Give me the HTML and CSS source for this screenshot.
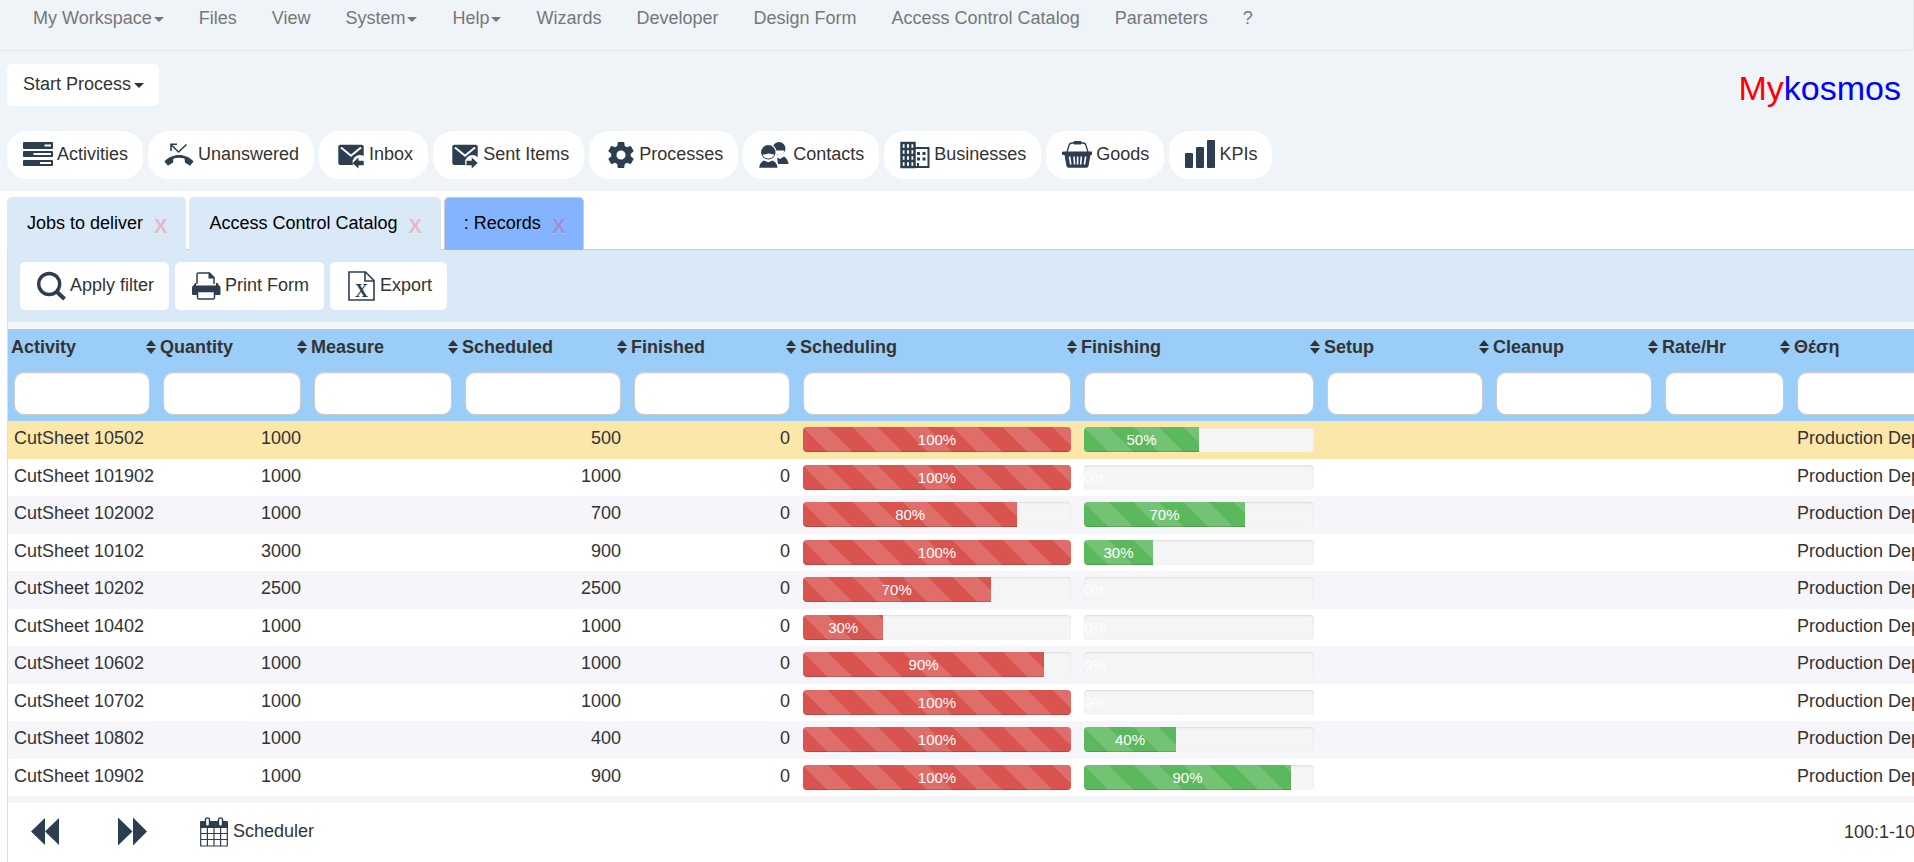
FILE: index.html
```html
<!DOCTYPE html>
<html lang="en">

<head>
    <meta charset="UTF-8">
    <meta name="viewport" content="width=device-width, initial-scale=1.0">
    <title>Mykosmos - Records</title>
    <link rel="stylesheet" href="styles.css">
</head>

<body>

    <header class="top">
        <nav class="navbar">
            <a href="#">My Workspace<span class="caret"></span></a>
            <a href="#">Files</a>
            <a href="#">View</a>
            <a href="#">System<span class="caret"></span></a>
            <a href="#">Help<span class="caret"></span></a>
            <a href="#">Wizards</a>
            <a href="#">Developer</a>
            <a href="#">Design Form</a>
            <a href="#">Access Control Catalog</a>
            <a href="#">Parameters</a>
            <a href="#">?</a>
        </nav>

        <div class="brand-row">
            <button class="btn btn-start">Start Process <span class="caret"></span></button>
            <div class="brand"><span class="brand-my">My</span>kosmos</div>
        </div>

        <div class="modules">
            <button class="btn btn-icon pill">
                <svg class="icon" viewBox="0 0 30 30">
                    <rect x="0" y="2" width="30" height="7" rx="1" />
                    <rect x="0" y="11" width="30" height="6" rx="1" />
                    <rect x="0" y="20" width="30" height="6" rx="1" />
                    <path class="cut" d="M21.5 5.5h6.5M10.500 14h17.500M17 23h11" stroke-width="2" />
                </svg>
                <span>Activities</span>
            </button>
            <button class="btn btn-icon pill">
                <svg class="icon" viewBox="0 0 30 30">
                    <path class="line" d="M7 11V4.300h6M7 4.500l7.500 7.500 8-7.500" stroke-width="1.600" />
                    <path d="M.4 21.600C8 12.800 22 12.800 29.600 21.600L26 25.800C24 24.500 22.500 23.500 21 22.800L20.500 18.500C17 17.400 13 17.400 9.500 18.500L9 22.800C7.500 23.500 6 24.500 4 25.800Z" />
                </svg>
                <span>Unanswered</span>
            </button>
            <button class="btn btn-icon pill">
                <svg class="icon" viewBox="0 0 30 30">
                    <rect x="3.300" y="4.700" width="25.400" height="20.300" rx="2" />
                    <path class="cut" d="M6 7.500L16 15.800 26 7.500" stroke-width="2" />
                    <circle class="paper" cx="25" cy="22.500" r="7.500" />
                    <path d="M17.500 23l6-5.500v3.300h5.200v4.400h-5.200v3.300z" />
                </svg>
                <span>Inbox</span>
            </button>
            <button class="btn btn-icon pill">
                <svg class="icon" viewBox="0 0 30 30">
                    <rect x="3.300" y="4.700" width="25.400" height="20.300" rx="2" />
                    <path class="cut" d="M6 7.500L16 15.800 26 7.500" stroke-width="2" />
                    <circle class="paper" cx="23.500" cy="22.500" r="7.500" />
                    <path d="M28.700 23l-6-5.500v3.300h-5.200v4.400h5.200v3.300z" />
                </svg>
                <span>Sent Items</span>
            </button>
            <button class="btn btn-icon pill">
                <svg class="icon" viewBox="0 0 30 30">
                    <path transform="translate(.4 -.6) scale(1.3)" d="M19.43 12.98c.04-.32.07-.64.07-.98s-.03-.66-.07-.98l2.110-1.650c.19-.15.24-.42.12-.64l-2-3.460c-.12-.22-.39-.3-.61-.22l-2.490 1c-.52-.4-1.080-.73-1.690-.98l-.38-2.650C14.460 2.180 14.250 2 14 2h-4c-.25 0-.46.18-.49.42l-.38 2.650c-.61.25-1.170.59-1.690.98l-2.490-1c-.23-.09-.49 0-.61.22l-2 3.460c-.13.22-.07.49.12.64l2.110 1.650c-.04.32-.07.65-.07.98s.03.66.07.98l-2.110 1.650c-.19.15-.24.42-.12.64l2 3.460c.12.22.39.3.61.22l2.490-1c.52.4 1.080.73 1.690.98l.38 2.650c.03.24.24.42.49.42h4c.25 0 .46-.18.49-.42l.38-2.650c.61-.25 1.170-.59 1.690-.98l2.490 1c.23.09.49 0 .61-.22l2-3.460c.12-.22.07-.49-.12-.64l-2.110-1.650zM12 15.500c-1.930 0-3.500-1.570-3.500-3.500s1.570-3.500 3.500-3.500 3.500 1.570 3.500 3.500-1.570 3.500-3.500 3.500z" />
                </svg>
                <span>Processes</span>
            </button>
            <button class="btn btn-icon pill">
                <svg class="icon" viewBox="0 0 30 30">
                    <circle cx="20" cy="8.500" r="6.500" />
                    <path class="paper" d="M15.500 10.500h10c-.5 3-2.500 4.500-5 4.500s-4.500-1.500-5-4.500z" />
                    <path d="M18 17.500l3 1.500 4-2.500c2.500 1.500 4 4 4.500 7.500H19z" />
                    <circle class="paper" cx="9.300" cy="12.500" r="8.500" />
                    <circle cx="9.300" cy="12.300" r="7.200" />
                    <path class="paper" d="M3.500 14.500c4 0 5-1 6.500-1 1.500 0 3 1 5.200 1-.6 2.600-3 3.900-5.900 3.900s-5.200-1.200-5.800-3.900z" />
                    <path d="M.2 27.800c.3-3.500 2-6 4.600-7.300l4.500 1.800 4.500-1.800c2.600 1.300 4.400 3.800 4.700 7.300z" />
                </svg>
                <span>Contacts</span>
            </button>
            <button class="btn btn-icon pill">
                <svg class="icon" viewBox="0 0 30 30">
                    <path class="line" d="M1.500 3h13v24H1.500zM5.800 3v24M10.200 3v24M1.500 9h13M1.500 15h13M1.500 21h13" stroke-width="2.500" />
                    <path class="line" d="M14.500 8h14v19h-14" stroke-width="2" />
                    <path d="M17 12h3v3h-3zM22.500 12h3v3h-3zM17 17.500h3v3h-3zM22.500 17.500h3v3h-3zM17 23h2v3h-2z" />
                </svg>
                <span>Businesses</span>
            </button>
            <button class="btn btn-icon pill">
                <svg class="icon" viewBox="0 0 30 30">
                    <path class="line" d="M5 12L7 5.500Q7.500 3 10 3H21Q23.500 3 24 5.500L26 12" stroke-width="1.300" />
                    <rect x="11.500" y="1" width="8" height="3.500" rx="1" />
                    <path d="M1.500 11.500h28a1 1 0 0 1 0 3.500h-1l-2 11a2 2 0 0 1-2 1.800h-18a2 2 0 0 1-2-1.800l-2-11h-1a1 1 0 0 1 0-3.500z" />
                    <path class="cut" d="M7.500 16.500l1.300 8M12 16.500l.6 8M15.600 16.500v8M19.300 16.500l-.6 8M23.700 16.500l-1.300 8" stroke-width="1.600" />
                </svg>
                <span>Goods</span>
            </button>
            <button class="btn btn-icon pill">
                <svg class="icon" viewBox="0 0 30 30">
                    <rect x="0" y="13" width="8" height="15" rx="1" />
                    <rect x="11" y="7" width="8" height="21" rx="1" />
                    <rect x="22" y="0" width="8" height="28" rx="1" />
                </svg>
                <span>KPIs</span>
            </button>
        </div>
    </header>

    <main class="workspace">
        <ul class="tabs">
            <li class="tab"><a href="#">Jobs to deliver</a><button class="close" aria-label="Close Jobs to deliver">X</button></li>
            <li class="tab"><a href="#">Access Control Catalog</a><button class="close" aria-label="Close Access Control Catalog">X</button></li>
            <li class="tab active"><a href="#">: Records</a><button class="close" aria-label="Close Records">X</button></li>
        </ul>

        <div class="panel">
            <div class="toolbar">
                <button class="btn btn-icon">
                    <svg class="icon" viewBox="0 0 30 30">
                        <circle class="line" cx="13.200" cy="13" r="10.500" stroke-width="3.400" />
                        <path class="line" d="M20.500 20.500L28.500 28" stroke-width="4.200" />
                    </svg>
                    <span>Apply filter</span>
                </button>
                <button class="btn btn-icon">
                    <svg class="icon" viewBox="0 0 30 30">
                        <path class="line" d="M6 13V3.500Q6 2 7.500 2H18.500L23 6.500V13" stroke-width="1.500" />
                        <path d="M17.500 1.500l6 6h-6z" />
                        <path d="M3 14q0-2 2-2v2.500h20V12h1q1.500 0 1.500 2 2 .5 2 3v6q0 1-1 1H2q-1 0-1-1v-6q0-2.500 2-3z" />
                        <path class="paper" d="M6.500 20.500h17v6q0 1.500-1.500 1.500H8q-1.500 0-1.500-1.500z" />
                        <path class="line" d="M6.500 20.500h17v6q0 1.500-1.500 1.500H8q-1.500 0-1.500-1.500z" stroke-width="1.500" />
                    </svg>
                    <span>Print Form</span>
                </button>
                <button class="btn btn-icon">
                    <svg class="icon" viewBox="0 0 30 30">
                        <path class="line" d="M3 1H19.500L28 9.500V29H3zM19 1.500V10H28" stroke-width="1.600" />
                        <text class="glyph" x="15.500" y="26" text-anchor="middle">X</text>
                    </svg>
                    <span>Export</span>
                </button>
            </div>

            <div class="grid">
                <table class="records">
                    <colgroup>
                        <col class="w-activity">
                        <col class="w-short">
                        <col class="w-short">
                        <col class="w-medium">
                        <col class="w-medium">
                        <col class="w-scheduling">
                        <col class="w-finishing">
                        <col class="w-medium">
                        <col class="w-medium">
                        <col class="w-rate">
                        <col class="w-place">
                    </colgroup>
                    <thead>
                        <tr class="titles" id="titles"></tr>
                        <tr class="filters" id="filters"></tr>
                    </thead>
                    <tbody id="rows"></tbody>
                </table>

                <div class="footer">
                    <div class="pager">
                        <button class="btn btn-icon" aria-label="Previous page">
                            <svg class="icon" viewBox="0 0 30 30">
                                <path d="M15 1v27L1 14.500zM29 1v27L15 14.500z" />
                            </svg>
                        </button>
                        <button class="btn btn-icon" aria-label="Next page">
                            <svg class="icon" viewBox="0 0 30 30">
                                <path d="M1 0.500v28L15.500 14.500zM16 0.500v28L30 14.500z" />
                            </svg>
                        </button>
                    </div>
                    <button class="btn btn-icon">
                        <svg class="icon" viewBox="0 0 30 30">
                            <path d="M1 5q0-1 1-1h26q1 0 1 1v6H1z" />
                            <path class="line" d="M1.700 10v19H28.300V10M1.700 16.500H28.300M1.700 22.500H28.300M8.400 10V29M15 10V29M21.600 10V29" stroke-width="1.200" />
                            <path class="line" d="M8.500 3v4M21.500 3v4" stroke-width="5.500" stroke-linecap="round" />
                            <path class="cut" d="M8.500 2.800v4.500M21.500 2.800v4.500" stroke-width="2.600" stroke-linecap="round" />
                        </svg>
                        <span>Scheduler</span>
                    </button>
                    <span class="count">100:1-100</span>
                </div>
            </div>
        </div>
    </main>

    <script>
        const columns = ['Activity', 'Quantity', 'Measure', 'Scheduled', 'Finished', 'Scheduling',
            'Finishing', 'Setup', 'Cleanup', 'Rate/Hr', 'Θέση'];

        // activity, quantity, scheduled, finished, scheduling %, finishing %
        const records = [
            ['CutSheet 10502', 1000, 500, 0, 100, 50],
            ['CutSheet 101902', 1000, 1000, 0, 100, 0],
            ['CutSheet 102002', 1000, 700, 0, 80, 70],
            ['CutSheet 10102', 3000, 900, 0, 100, 30],
            ['CutSheet 10202', 2500, 2500, 0, 70, 0],
            ['CutSheet 10402', 1000, 1000, 0, 30, 0],
            ['CutSheet 10602', 1000, 1000, 0, 90, 0],
            ['CutSheet 10702', 1000, 1000, 0, 100, 0],
            ['CutSheet 10802', 1000, 400, 0, 100, 40],
            ['CutSheet 10902', 1000, 900, 0, 100, 90]
        ];

        function bar(value, type) {
            return `<div class="progress"><div class="bar ${type}" style="width: ${value}%">${value}%</div></div>`;
        }

        document.getElementById('titles').innerHTML = columns.map((name, i) =>
            `<th scope="col"><div class="title"><label for="filter${i}">${name}</label><span class="sort"></span></div></th>`
        ).join('');

        document.getElementById('filters').innerHTML = columns.map((name, i) =>
            `<td><input type="text" id="filter${i}"></td>`
        ).join('');

        document.getElementById('rows').innerHTML = records.map((r, i) => `
            <tr class="${i === 0 ? 'selected' : ''}">
                <td>${r[0]}</td>
                <td class="num">${r[1]}</td>
                <td></td>
                <td class="num">${r[2]}</td>
                <td class="num">${r[3]}</td>
                <td>${bar(r[4], 'danger')}</td>
                <td>${bar(r[5], 'success')}</td>
                <td></td>
                <td></td>
                <td></td>
                <td>Production Department</td>
            </tr>`
        ).join('');
    </script>

</body>

</html>
```
FILE: styles.css
```css
* {
    box-sizing: border-box;
}

body {
    display: flex;
    flex-direction: column;
    min-height: 100vh;
    margin: 0;
    overflow-x: hidden;
    font-family: Arial, "Liberation Sans", sans-serif;
    font-size: 18px;
    line-height: 26px;
    color: #333;
    background: #fff;
}

a {
    color: inherit;
    text-decoration: none;
}

/* Top area */
.top {
    background: #eff4f9;
}

.navbar {
    display: flex;
    gap: 35px;
    height: 51px;
    padding: 5px 33px;
    border-right: 1px solid #e7e7e7;
    border-bottom: 1px solid #e7e7e7;
    border-bottom-right-radius: 4px;
    color: #777;
}

.caret {
    display: inline-block;
    margin-left: 2px;
    vertical-align: middle;
    border-top: 5px solid;
    border-left: 5px solid transparent;
    border-right: 5px solid transparent;
}

.brand-row {
    display: flex;
    justify-content: space-between;
    align-items: flex-start;
    padding: 13px 13px 0 7px;
}

.brand {
    font-size: 34px;
    line-height: 48px;
    color: #00f;
}

.brand-my {
    color: #f00;
}

.modules {
    display: flex;
    gap: 5px;
    padding: 19px 7px 12px;
}

/* Buttons */
.btn {
    border: 0;
    border-radius: 5px;
    padding: 0 15px 0 16px;
    font: inherit;
    color: #333;
    background: #fff;
    white-space: nowrap;
    cursor: pointer;
}

.btn-start {
    height: 42px;
    padding-bottom: 2px;
}

.btn-start .caret {
    margin-left: -2px;
}

.btn-icon {
    display: flex;
    align-items: center;
    gap: 4px;
    height: 48px;
}

.btn-icon span {
    padding-bottom: 2px;
}

.pill {
    border-radius: 20px;
}

.icon {
    flex: none;
    width: 30px;
    height: 30px;
    fill: #2c3e50;
}

.icon .line {
    fill: none;
    stroke: #2c3e50;
}

.icon .cut {
    fill: none;
    stroke: #fff;
}

.icon .paper {
    fill: #fff;
}

.icon .glyph {
    font: bold 18px "Liberation Serif", serif;
}

/* Tabs */
.workspace {
    display: flex;
    flex-direction: column;
    flex-grow: 1;
    padding: 6px 0 0 7px;
}

.tabs {
    display: flex;
    gap: 3px;
    height: 53px;
    margin: 0;
    padding: 0;
    list-style: none;
    border-bottom: 1px solid #c5cdd6;
}

.tab {
    display: flex;
    align-items: center;
    gap: 11px;
    height: 53px;
    padding: 0 19px 0 20px;
    border-radius: 5px 5px 0 0;
    color: #000;
    background: #dae9f8;
}

.tab a {
    padding-bottom: 2px;
}

.tab.active {
    padding: 0 18px 0 19px;
    border: 1px solid #ccc;
    border-bottom: 0;
    background: #84b4ff;
}

.close {
    padding: 4px 0 0;
    border: 0;
    background: none;
    font: bold 20px/24px Arial, "Liberation Sans", sans-serif;
    color: #f00;
    text-shadow: 0 1px 0 #fff;
    opacity: 0.2;
    cursor: pointer;
}

.panel {
    flex-grow: 1;
    overflow: hidden;
    border-left: 1px solid #ddd;
}

.toolbar {
    display: flex;
    gap: 6px;
    padding: 12px;
    background: #dae9f8;
}

/* Grid */
.grid {
    width: max-content;
    border-top: 7px solid #f3f5f7;
}

.records {
    width: 1980px;
    table-layout: fixed;
    border-collapse: collapse;
}

.w-activity {
    width: 149px;
}

.w-short {
    width: 151px;
}

.w-medium {
    width: 169px;
}

.w-scheduling {
    width: 281px;
}

.w-finishing {
    width: 243px;
}

.w-rate {
    width: 132px;
}

.records thead {
    background: #9bcdf9;
}

.records th {
    height: 37px;
    padding: 0 1px 2px 3px;
    text-align: left;
}

.title {
    display: flex;
    justify-content: space-between;
    align-items: center;
}

.sort::before,
.sort::after {
    content: "";
    display: block;
    border-left: 5px solid transparent;
    border-right: 5px solid transparent;
}

.sort::before {
    border-bottom: 6px solid #333;
    margin-bottom: 2px;
}

.sort::after {
    border-top: 6px solid #333;
}

.records td {
    height: 37px;
    padding: 4px 7px 0 6px;
    vertical-align: top;
    white-space: nowrap;
}

.records .filters td {
    height: 55px;
    padding-top: 6px;
}

.filters input {
    display: block;
    width: 100%;
    height: 43px;
    padding: 6px 12px;
    border: 1px solid #ccc;
    border-radius: 10px;
    font: inherit;
    background: #fff;
    box-shadow: inset 0 1px 1px rgba(0, 0, 0, 0.075);
}

.records tbody tr:nth-child(odd) {
    background: #f5f5fa;
}

.records tbody tr:nth-child(even) {
    background: #fff;
}

.records tbody tr:nth-child(odd) td {
    height: 38px;
}

.records tbody tr.selected {
    background: #fce7ab;
}

.records .num {
    text-align: right;
}

.progress {
    height: 25px;
    margin-top: 2px;
    overflow: hidden;
    border-radius: 4px;
    background: #f5f5f5;
    box-shadow: inset 0 1px 2px rgba(0, 0, 0, 0.1);
}

.bar {
    height: 100%;
    font-size: 15px;
    line-height: 25px;
    text-align: center;
    color: #fff;
    background-image: linear-gradient(45deg, rgba(255, 255, 255, 0.15) 25%, transparent 25%, transparent 50%, rgba(255, 255, 255, 0.15) 50%, rgba(255, 255, 255, 0.15) 75%, transparent 75%, transparent);
    background-size: 50px 50px;
    box-shadow: inset 0 -1px 0 rgba(0, 0, 0, 0.15);
}

.danger {
    background-color: #d9534f;
}

.success {
    background-color: #5cb85c;
}

/* Footer */
.footer {
    display: flex;
    align-items: center;
    gap: 21px;
    padding: 5px 63px 5px 6px;
    border-top: 7px solid #f3f5f7;
}

.pager {
    display: flex;
    gap: 26px;
}

.count {
    margin-left: auto;
}
```
